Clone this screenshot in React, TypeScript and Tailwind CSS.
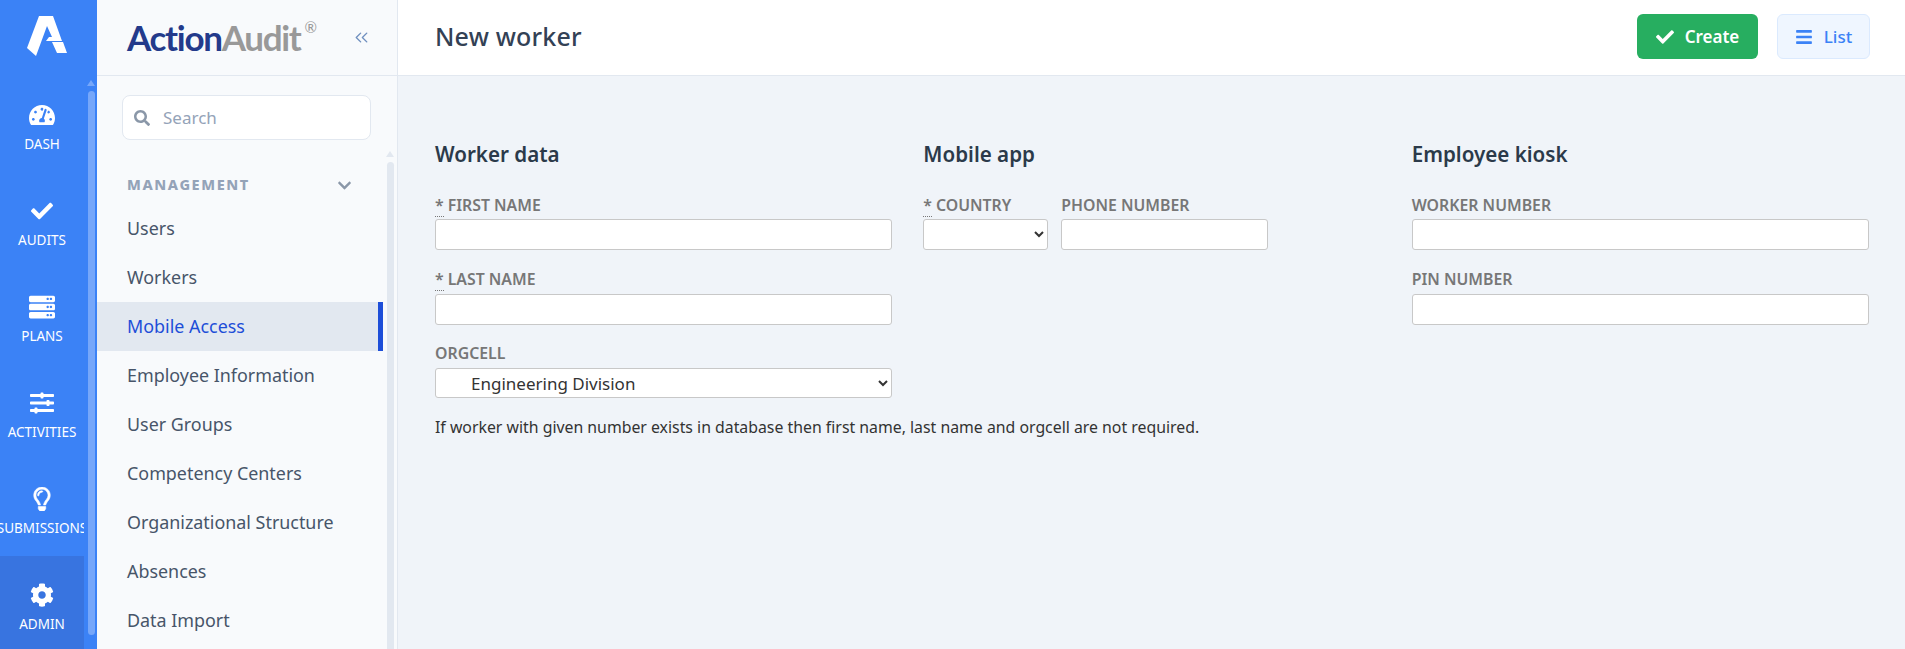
import React from 'react';
import { ChevronsLeft } from 'lucide-react';
import { FaTachometerAlt, FaCheck, FaServer, FaSlidersH, FaRegLightbulb, FaCog, FaSearch, FaChevronDown, FaBars } from 'react-icons/fa';

const railItems = [
    { label: 'Dash', icon: <FaTachometerAlt className="text-[26px]" /> },
    { label: 'Audits', icon: <FaCheck className="text-[22px]" /> },
    { label: 'Plans', icon: <FaServer className="text-[26px]" /> },
    { label: 'Activities', icon: <FaSlidersH className="text-[24px]" /> },
    { label: 'Submissions', icon: <FaRegLightbulb className="text-[24px] stroke-[12]" /> },
    { label: 'Admin', icon: <FaCog className="text-[24px]" />, active: true },
];

const menuItems = [
    'Users',
    'Workers',
    'Mobile Access',
    'Employee Information',
    'User Groups',
    'Competency Centers',
    'Organizational Structure',
    'Absences',
    'Data Import',
];

const Required = () => (
    <abbr title="required" className="no-underline border-b border-dotted border-[#777] mr-1 inline-block h-[22px] leading-[20px]">*</abbr>
);

const Label = ({ children, required, lifted }: { children: React.ReactNode; required?: boolean; lifted?: boolean }) => (
    <label className={`flex h-[20px] items-start uppercase text-[15.84px] leading-[20px] font-semibold text-[#777] whitespace-nowrap ${lifted ? '-mt-[1px] mb-[5px]' : 'mb-[4px]'}`}>
        {required && <Required />}
        <span>{children}</span>
    </label>
);

const TextInput = () => (
    <input type="text" className="block w-full h-[31px] bg-white border border-[#c8c8c8] rounded-[3px]" />
);

const Field = ({ label, required, lifted }: { label: string; required?: boolean; lifted?: boolean }) => (
    <div className="mb-[19.5px]">
        <Label required={required} lifted={lifted}>{label}</Label>
        <TextInput />
    </div>
);

const App: React.FC = () => {
    return (
        <div className="flex h-screen w-full overflow-hidden bg-[#f0f4f9] font-['Noto_Sans',sans-serif]">
            <aside className="flex w-[97px] shrink-0 bg-[#3b82f6] text-white">
                <div className="w-[84px] shrink-0 overflow-hidden">
                    <div className="h-[76px] pl-[12px] pb-[6px] flex items-center justify-center">
                        <svg width="56" height="50" viewBox="20 10 56 50" fill="white">
                            <path d="M39 16H53L62 41H46L49 37H52L47 26L36 56L27 48Z" />
                            <path d="M52 42H63L67 53H57Z" />
                        </svg>
                    </div>
                    {railItems.map(item => (
                        <div
                            key={item.label}
                            className={`h-[96px] flex flex-col items-center pt-[26px] ${item.active ? 'bg-[#3874e0]' : ''}`}
                        >
                            <div className="h-[26px] flex items-center justify-center">{item.icon}</div>
                            <span className="mt-[6px] text-[13.5px] leading-[20px] uppercase whitespace-nowrap">{item.label}</span>
                        </div>
                    ))}
                </div>
                <div className="w-[8px] ml-[3px] pt-[80px] pb-[14px] flex flex-col items-center">
                    <div className="w-0 h-0 border-x-[4px] border-x-transparent border-b-[6px] border-b-[#76a7fa]" />
                    <div className="mt-[5px] flex-1 w-[7px] rounded bg-[#76a7fa]" />
                </div>
            </aside>

            <nav className="w-[301px] shrink-0 bg-[#f8fafc] border-r border-[#e2e8f0] flex flex-col">
                <div className="h-[76px] shrink-0 border-b border-[#e2e8f0] flex items-center justify-between pl-[30px] pr-[25px]">
                    <div className="flex items-start font-['Lato',sans-serif] text-[35px] leading-none tracking-[-1.3px] font-bold">
                        <span className="text-[#233a8b]">Action</span>
                        <span className="text-[#999999]">Audit</span>
                        <span className="text-[15px] font-normal text-[#999999] ml-[4px] tracking-normal">®</span>
                    </div>
                    <ChevronsLeft size={21} strokeWidth={1.6} className="text-[#6f8fbf]" />
                </div>
                <div className="flex-1 flex min-h-0">
                    <div className="w-[286px] shrink-0">
                        <div className="pl-[25px] pr-[12px] pt-[19px]">
                            <div className="flex items-center h-[45px] bg-white border border-[#e2e8f0] rounded-[8px] pl-[11px] text-[#94a3b8]">
                                <FaSearch className="text-[16px] text-[#8a97a8]" />
                                <span className="ml-[13px] text-[17px]">Search</span>
                            </div>
                        </div>
                        <div className="mt-[33px] h-[24px] flex items-center justify-between pl-[30px] pr-[31px]">
                            <span className="text-[14.5px] font-extrabold tracking-[1.6px] text-[#94a3b8] uppercase">Management</span>
                            <FaChevronDown className="text-[15px] text-[#8a97a8]" />
                        </div>
                        <ul className="mt-[7px]">
                            {menuItems.map(name => (
                                <li
                                    key={name}
                                    className={`h-[49px] flex items-center pl-[30px] text-[17.9px] ${name === 'Mobile Access' ? 'bg-[#e2e8f0] text-[#1d4ed8] border-r-[5px] border-[#1d4ed8]' : 'text-[#475569]'}`}
                                >
                                    {name}
                                </li>
                            ))}
                        </ul>
                    </div>
                    <div className="w-[8px] ml-[3px] pt-[75px] flex flex-col items-center">
                        <div className="w-0 h-0 border-x-[4px] border-x-transparent border-b-[6px] border-b-[#e2e8f0]" />
                        <div className="mt-[5px] flex-1 w-[7px] rounded-t bg-[#e2e8f0]" />
                    </div>
                </div>
            </nav>

            <main className="flex-1 min-w-0 flex flex-col">
                <header className="h-[76px] shrink-0 bg-white border-b border-[#e2e8f0] flex items-center justify-between pl-[37px] pr-[35px]">
                    <h1 className="text-[25px] -mt-[2px] font-medium text-[#334155] tracking-[0.2px]">New worker</h1>
                    <div className="flex items-center gap-[19px] -mt-[2px]">
                        <button className="h-[45px] w-[121px] flex items-center justify-center gap-[11px] rounded-[6px] bg-[#27ae60] text-white text-[17px] font-semibold">
                            <FaCheck className="text-[18px]" />
                            Create
                        </button>
                        <button className="h-[45px] w-[93px] flex items-center justify-center gap-[11px] rounded-[6px] bg-[#eff6ff] border border-[#dbeafe] text-[#3b82f6] text-[17px] font-medium">
                            <FaBars className="text-[18px]" />
                            List
                        </button>
                    </div>
                </header>
                <section className="grid grid-cols-3 gap-x-[31px] pl-[37px] pr-[36px] pt-[64px]">
                    <div>
                        <h2 className="h-[28px] leading-[28px] text-[20.6px] font-semibold text-[#2b3a4a] mb-[27px]">Worker data</h2>
                        <Field label="First name" required />
                        <Field label="Last name" required lifted />
                        <div className="mb-[19px]">
                            <Label lifted>Orgcell</Label>
                            <select className="block w-full h-[30px] mt-[1px] bg-white border border-[#c8c8c8] rounded-[3px] pl-[31px] text-[#333] text-[17px]">
                                <option>Engineering Division</option>
                            </select>
                        </div>
                        <p className="text-[15.84px] leading-[20px] text-[#333] whitespace-nowrap">
                            If worker with given number exists in database then first name, last name and orgcell are not required.
                        </p>
                    </div>
                    <div>
                        <h2 className="h-[28px] leading-[28px] text-[20.6px] font-semibold text-[#2b3a4a] mb-[27px]">Mobile app</h2>
                        <div className="flex gap-[13px]">
                            <div className="w-[125px]">
                                <Label required>Country</Label>
                                <select className="block w-full h-[31px] bg-white border border-[#c8c8c8] rounded-[3px] text-[#333]">
                                    <option></option>
                                </select>
                            </div>
                            <div className="w-[207px]">
                                <Label>Phone number</Label>
                                <TextInput />
                            </div>
                        </div>
                    </div>
                    <div>
                        <h2 className="h-[28px] leading-[28px] text-[20.6px] font-semibold text-[#2b3a4a] mb-[27px]">Employee kiosk</h2>
                        <Field label="Worker number" />
                        <Field label="Pin number" lifted />
                    </div>
                </section>
            </main>
        </div>
    );
};

export default App;
